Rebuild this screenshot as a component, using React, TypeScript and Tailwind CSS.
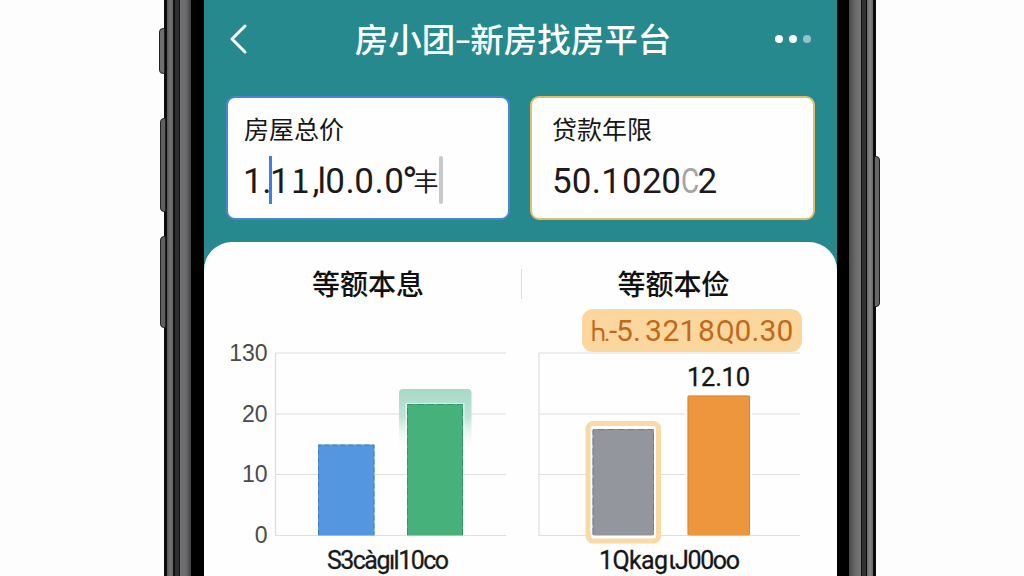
import { clsx } from 'clsx';

type Glyph = { ch: string; className: string };

const priceGlyphs: Glyph[] = [
  { ch: '1', className: 'w-[19.2px]' },
  { ch: '.', className: 'w-[7.8px]' },
  { ch: '1', className: 'w-[20.8px]' },
  { ch: '1', className: "w-[21.7px] font-['Noto_Sans_CJK_SC',sans-serif] text-[34px]" },
  { ch: ',', className: 'w-[5px]' },
  { ch: 'l', className: 'w-[7.8px]' },
  { ch: '0', className: 'w-[20.2px]' },
  { ch: '.', className: 'w-[8.8px]' },
  { ch: '0', className: 'w-[20.2px]' },
  { ch: '.', className: 'w-[9.8px]' },
  { ch: '0', className: 'w-[17.8px]' },
  { ch: '°', className: 'w-[11.4px] origin-[0_30%] scale-120' },
  { ch: '丰', className: "relative -top-[2px] w-[26px] font-['Noto_Sans_CJK_SC',sans-serif] text-[25px]" },
];

const termGlyphs: Glyph[] = [
  { ch: '5', className: 'w-[19.7px]' },
  { ch: '0', className: 'w-[20px]' },
  { ch: '.', className: 'w-[9.6px]' },
  { ch: '1', className: 'w-[20.8px]' },
  { ch: '0', className: 'w-[19.8px]' },
  { ch: '2', className: 'w-[19.4px]' },
  { ch: '0', className: 'w-[19.4px]' },
  { ch: 'C', className: 'w-[16.9px] text-[#a3a3a3] scale-x-80 origin-left' },
  { ch: '2', className: 'w-[20px]' },
];

const badgeGlyphs: Glyph[] = [
  { ch: 'Һ', className: 'w-[13px] scale-x-75 origin-left' },
  { ch: '.', className: 'w-[5px] text-[24px]' },
  { ch: '-', className: 'w-[7px]' },
  { ch: '5', className: 'w-[17px]' },
  { ch: '.', className: 'w-[12px]' },
  { ch: '3', className: 'w-[17.5px]' },
  { ch: '2', className: 'w-[17px]' },
  { ch: '1', className: 'w-[18.5px]' },
  { ch: '8', className: 'w-[18px]' },
  { ch: 'Q', className: 'w-[18.5px] scale-x-90 origin-left' },
  { ch: '0', className: 'w-[17px]' },
  { ch: '.', className: 'w-[8px]' },
  { ch: '3', className: 'w-[17px]' },
  { ch: '0', className: 'w-[17px]' },
];

function GlyphRow({ glyphs, className }: { glyphs: Glyph[]; className?: string }) {
  return (
    <div className={clsx('flex items-baseline whitespace-nowrap', className)}>
      {glyphs.map((g, i) => (
        <span key={i} className={clsx('shrink-0', g.className)}>
          {g.ch}
        </span>
      ))}
    </div>
  );
}

function LeftEdge() {
  return (
    <div className="relative flex h-full w-10 shrink-0">
      <div className="absolute -left-[5px] top-7 h-[46px] w-[6px] rounded-l-sm border border-[#222] bg-[#6e706e]" />
      <div className="absolute -left-[4px] top-[118px] h-[94px] w-[6px] rounded-l-sm border border-[#222] bg-[#5d605e]" />
      <div className="absolute -left-[4px] top-[236px] h-[92px] w-[6px] rounded-l-sm border border-[#222] bg-[#5d605e]" />
      <div className="w-[3px] bg-[#0c0c0c]" />
      <div className="w-[6px] bg-linear-to-r from-[#555] via-[#747274] to-[#666]" />
      <div className="w-[2px] bg-[#111]" />
      <div className="w-[4px] bg-[#2f2e30]" />
      <div className="w-px bg-[#151515]" />
      <div className="w-[11px] bg-linear-to-r from-[#706f71] via-[#6c6b6d] to-[#434244]" />
      <div className="flex-1 bg-black" />
    </div>
  );
}

function RightEdge() {
  return (
    <div className="relative flex h-full w-[39px] shrink-0">
      <div className="w-[12px] bg-black" />
      <div className="w-[12px] bg-linear-to-r from-[#4a4849] via-[#6a6768] to-[#777]" />
      <div className="w-px bg-[#111]" />
      <div className="w-[4px] bg-[#303131]" />
      <div className="w-px bg-[#0c0c0c]" />
      <div className="w-[6px] bg-linear-to-r from-[#666] via-[#858585] to-[#666]" />
      <div className="flex-1 bg-[#0c0c0c]" />
      <div className="absolute -right-[4px] top-[156px] h-[151px] w-[6px] rounded-r-sm border border-[#181818] bg-[#666]" />
    </div>
  );
}

function Grid({ x1, x2 }: { x1: number; x2: number }) {
  return (
    <g stroke="#dedede" strokeWidth="1.2">
      {[13, 74, 134.5, 195.5].map((y) => (
        <line key={y} x1={x1} x2={x2} y1={y} y2={y} />
      ))}
      <line x1={x1} x2={x1} y1="13" y2="196" />
    </g>
  );
}

function InterestChart() {
  return (
    <svg width="316" height="236" viewBox="0 0 316 236" className="shrink-0 font-[Roboto,sans-serif]">
      <defs>
        <linearGradient id="halo" x1="0" y1="0" x2="0" y2="1">
          <stop offset="0" stopColor="#a5d9c5" />
          <stop offset="0.45" stopColor="#c0e4d7" />
          <stop offset="1" stopColor="#fff" stopOpacity="0" />
        </linearGradient>
      </defs>
      <Grid x1={71.5} x2={302} />
      <g fontSize="23" fill="#4a4a4a" textAnchor="end" fontFamily="Liberation Sans, sans-serif">
        <text x="63.5" y="20.5">130</text>
        <text x="63.5" y="81.5">20</text>
        <text x="63.5" y="142">10</text>
        <text x="63.5" y="203">0</text>
      </g>
      <rect x="114" y="104.5" width="56.5" height="91" fill="#5596e0" />
      <path d="M114.5 195V105H170V195" fill="none" stroke="#3f6caa" strokeDasharray="5 3" strokeOpacity="0.7" />
      <path d="M195 112V53q0-4 4-4h64.500q4 0 4 4v59z" fill="url(#halo)" />
      <rect x="201.500" y="63" width="59" height="132.500" fill="#fff" opacity="0.6" />
      <rect x="203" y="64" width="56" height="131.500" fill="#46b17a" />
      <path d="M203.500 195V64.500H258.500V195" fill="none" stroke="#28885a" strokeDasharray="7 3" strokeOpacity="0.7" />
      <g fontSize="25" fill="#1a1a1a" stroke="#1a1a1a" strokeWidth="0.3">
        <text x="123" y="229" textLength="122">S3càgıl10co</text>
      </g>
    </svg>
  );
}

function PrincipalChart() {
  return (
    <svg width="317" height="236" viewBox="0 0 317 236" className="shrink-0 font-[Roboto,sans-serif]">
      <Grid x1={19} x2={280} />
      <rect x="68" y="83.500" width="70.500" height="117.500" rx="5" fill="#fff" stroke="#fbd9a4" strokeWidth="5" />
      <rect x="72.500" y="89" width="61.500" height="106.500" rx="2" fill="#93969d" />
      <path d="M73 195V89.500H133.500V195" fill="none" stroke="#6f7074" strokeDasharray="7 3" strokeOpacity="0.7" />
      <rect x="165" y="56" width="67" height="139" fill="#fff" />
      <rect x="167.500" y="55.500" width="62.500" height="140" rx="2" fill="#ed963e" />
      <path d="M168 195V56H229.500V195" fill="none" stroke="#ce741d" strokeOpacity="0.5" />
      <g fill="#161616" stroke="#161616" strokeWidth="0.3">
        <text x="167" y="46" fontSize="25.5" textLength="63">12.10</text>
        <text x="79" y="229" fontSize="25" textLength="69">1Qkag</text>
        <text x="149.500" y="229" fontSize="25">ɩ</text>
        <text x="155" y="229" fontSize="25" textLength="65">J00oo</text>
      </g>
    </svg>
  );
}

export default function App() {
  return (
    <div className="flex h-[576px] w-[1024px] overflow-hidden bg-[#fdfdfe] pl-[164px] font-['Noto_Sans_CJK_SC',sans-serif]">
      <LeftEdge />
      <main className="flex h-full w-[633px] shrink-0 flex-col bg-[#25898e]">
        <header className="flex h-[78px] shrink-0 items-center justify-between pr-[26px] pl-[25px]">
          <svg width="22" height="34" viewBox="0 0 22 34" fill="none" stroke="#fff" strokeWidth="3" strokeLinecap="round" strokeLinejoin="round">
            <path d="M16 4 3 17l13 13" />
          </svg>
          <h1 className="flex pb-[3px] text-[33.5px] leading-none font-medium whitespace-nowrap text-white">
            房小团
            <span className="flex w-[15px] justify-center">
              <span className="-translate-y-px scale-x-[.85]">–</span>
            </span>
            新房找房平台
          </h1>
          <div className="flex gap-[6px] pb-px">
            <i className="size-2 rounded-full bg-white" />
            <i className="size-2 rounded-full bg-white" />
            <i className="size-2 rounded-full bg-white/50" />
          </div>
        </header>

        <section className="flex h-[164px] shrink-0 gap-5 pt-[18px] pl-[22px]">
          <div className="relative h-[124px] w-[284px] rounded-[9px] border-2 border-[#4a86d4] bg-[#fefefe] pt-[13px] pl-4">
            <div className="text-[25px] leading-[34px] text-[#161616]">房屋总价</div>
            <GlyphRow
              glyphs={priceGlyphs}
              className="mt-[10px] -ml-px h-12 font-[Roboto,sans-serif] text-[35px] leading-[48px] text-[#1c1a1a]"
            />
            <div className="absolute top-[58px] left-[41px] h-12 w-[2.500px] bg-[#3f7fe0]" />
            <div className="absolute top-[58px] left-[211px] h-12 w-1 rounded-full bg-[#c9c9c9]" />
          </div>
          <div className="h-[124px] w-[285px] rounded-[9px] border-2 border-[#dfbd6c] bg-[#fefefe] pt-[13px] pl-5">
            <div className="text-[25px] leading-[34px] text-[#161616]">贷款年限</div>
            <GlyphRow
              glyphs={termGlyphs}
              className="mt-[13px] h-12 font-[Roboto,sans-serif] text-[35px] leading-[48px] text-[#1c1a1a]"
            />
          </div>
        </section>

        <section className="relative flex h-[334px] shrink-0 flex-col rounded-t-[28px] bg-[#fefefe]">
          <div className="flex h-[98px] items-start pt-[27px]">
            <h2 className="-mt-px w-[317px] pl-[11px] text-center text-[28px] leading-[30px] font-medium text-[#111]">等额本息</h2>
            <div className="h-[30px] w-px bg-[#dcdcdc]" />
            <h2 className="-mt-px flex-1 pr-[12px] text-center text-[28px] leading-[30px] font-medium text-[#111]">等额本俭</h2>
          </div>
          <div className="flex">
            <InterestChart />
            <PrincipalChart />
          </div>
          <div className="absolute top-[67px] left-[378px] flex h-[43px] w-[220px] items-center rounded-[11px] bg-[#fbd79e] pl-[9px]">
            <GlyphRow glyphs={badgeGlyphs} className="font-[Roboto,sans-serif] text-[30px] leading-none text-[#c2681a]" />
          </div>
        </section>
      </main>
      <RightEdge />
    </div>
  );
}
